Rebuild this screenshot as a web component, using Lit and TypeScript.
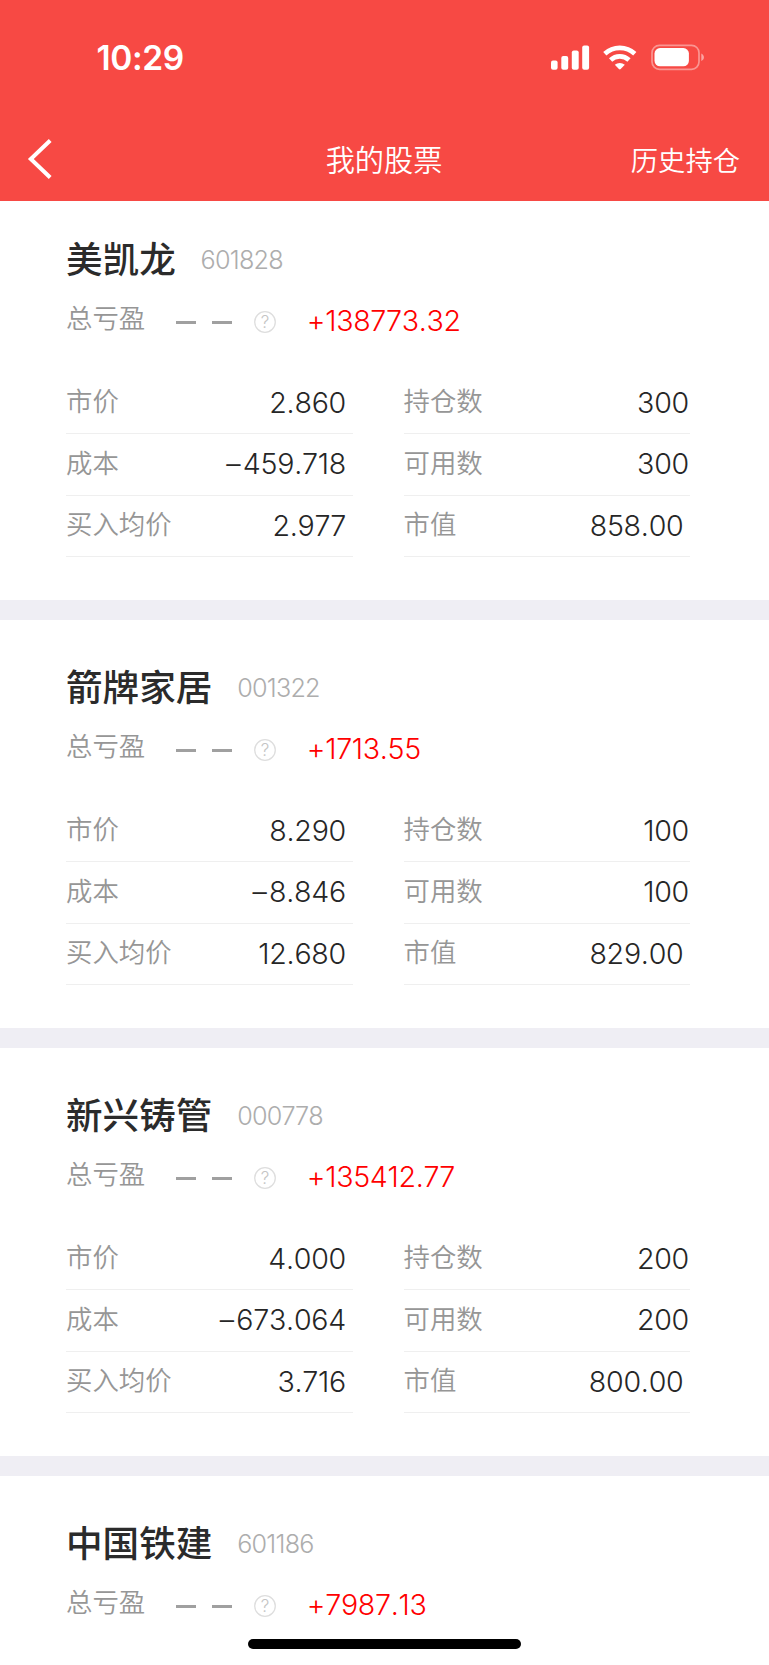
import { LitElement, html, css } from "lit";
import { customElement, property } from "lit/decorators.js";

interface Holding {
  name: string;
  code: string;
  profit: string;
  price?: string;
  cost?: string;
  average?: string;
  held?: string;
  usable?: string;
  value?: string;
}

const HOLDINGS: Holding[] = [
  { name: "美凯龙", code: "601828", profit: "+138773.32", price: "2.860", cost: "–459.718", average: "2.977", held: "300", usable: "300", value: "858.00" },
  { name: "箭牌家居", code: "001322", profit: "+1713.55", price: "8.290", cost: "–8.846", average: "12.680", held: "100", usable: "100", value: "829.00" },
  { name: "新兴铸管", code: "000778", profit: "+135412.77", price: "4.000", cost: "–673.064", average: "3.716", held: "200", usable: "200", value: "800.00" },
  { name: "中国铁建", code: "601186", profit: "+7987.13" },
];

@customElement("status-bar")
class StatusBar extends LitElement {
  static styles = css`
    :host { display: flex; height: 116px; box-sizing: border-box; padding: 0 64px 0 96.5px; justify-content: space-between; align-items: center; }
    .time { font: 600 33.5px/40px Inter, sans-serif; letter-spacing: -0.4px; color: #fff; }
    svg { display: block; }
  `;
  render() {
    return html`
      <span class="time">10:29</span>
      <svg width="154" height="28" viewBox="0 0 154 28" fill="#fff">
        <rect x="0" y="16.6" width="6.6" height="9.2" rx="2" />
        <rect x="10.3" y="12" width="6.9" height="13.8" rx="2" />
        <rect x="20.8" y="6.6" width="6.9" height="19.2" rx="2" />
        <rect x="31.2" y="1.6" width="6.9" height="24.2" rx="2" />
        <g fill="none" stroke="#fff" stroke-width="4.7">
          <path d="M53.8 9.8a22 22 0 0 1 30 0" />
          <path d="M59.6 16a13.5 13.5 0 0 1 18.4 0" />
        </g>
        <path d="M63.8 20.8a7.8 7.8 0 0 1 10 0l-4.1 4.3q-.9.9-1.8 0z" />
        <rect x="101" y="1.3" width="47" height="24" rx="7.5" fill="none" stroke="#fff" stroke-opacity=".42" stroke-width="1.7" />
        <rect x="103.5" y="4.1" width="34.4" height="18.2" rx="5.5" />
        <path d="M150.3 9.5c3.5 1.7 3.5 5.9 0 7.6z" fill-opacity=".5" />
      </svg>
    `;
  }
}

@customElement("nav-bar")
class NavBar extends LitElement {
  static styles = css`
    :host { display: grid; grid-template-columns: 1fr auto 1fr; align-items: center; height: 85px; box-sizing: border-box; padding: 0 29px 0 28px; color: #fff; font: 350 29.2px/40px "Noto Sans CJK SC", sans-serif; }
    svg { display: block; margin-left: -1px; }
    .heading { margin-top: -1px; }
    .action { justify-self: end; font-size: 27.3px; margin-top: 0; }
  `;
  render() {
    return html`
      <svg width="26" height="42" viewBox="0 0 26 42" fill="none" stroke="#fff" stroke-width="4"><path d="M23.2 2.5 3.8 21l19.4 18.5" /></svg>
      <span class="heading">我的股票</span>
      <span class="action">历史持仓</span>
    `;
  }
}

@customElement("stock-card")
class StockCard extends LitElement {
  @property({ attribute: false }) item!: Holding;

  static styles = css`
    :host { display: block; height: 364.4px; padding: 43.6px 79px 0 66px; border-bottom: 20px solid #efeef4; background: #fff; font-family: "Noto Sans CJK SC", sans-serif; color: #969696; }
    .title { display: flex; align-items: center; height: 50px; gap: 24.8px; }
    .name { font-size: 36.6px; line-height: 50px; font-weight: 500; color: #2b2b2b; margin-top: -5px; }
    .code { font: 300 25.2px/50px Inter, sans-serif; letter-spacing: -0.75px; font-kerning: none; color: #adadad; margin-top: -2px; }
    .summary { display: flex; align-items: center; height: 40px; margin-top: 15.4px; }
    .label { font-size: 26.4px; line-height: 40px; font-weight: 350; }
    .summary .label { width: 110px; margin-top: -7px; }
    .dashes { display: flex; gap: 16px; width: 78px; padding-top: 4px; }
    .dash { width: 20px; height: 3px; background: #a0a0a0; }
    .help { display: block; margin-top: 3px; }
    .mark { font: 300 17px Inter, sans-serif; fill: #c4c4c4; }
    .profit { margin: 1px 0 0 30.8px; color: #f00; font: 330 28.6px/40px Inter, sans-serif; letter-spacing: -0.3px; font-kerning: none; }
    .table { display: grid; grid-template-columns: 286.5px 286.5px; justify-content: space-between; grid-auto-rows: 61.6px; margin-top: 31.5px; }
    .row { display: flex; justify-content: space-between; align-items: center; border-bottom: 1.5px solid #efefef; box-sizing: border-box; }
    .row .label { margin-top: -5px; }
    .value { font: 330 28.6px/40px Inter, sans-serif; letter-spacing: -0.25px; font-kerning: none; color: #262626; padding-right: 6.5px; }
    .minus { display: inline-block; margin-right: 2.5px; }
    .tight { padding-right: 1px; }
  `;

  private row(label: string, value = "", tight = false) {
    const negative = value.startsWith("–");
    return html`<div class="row"><span class="label">${label}</span><span class="value ${tight ? "tight" : ""}">${negative ? html`<span class="minus">–</span>${value.slice(1)}` : value}</span></div>`;
  }

  render() {
    const s = this.item;
    return html`
      <div class="title"><span class="name">${s.name}</span><span class="code">${s.code}</span></div>
      <div class="summary">
        <span class="label">总亏盈</span>
        <span class="dashes"><i class="dash"></i><i class="dash"></i></span>
        <svg class="help" width="22" height="22" viewBox="0 0 22 22">
          <circle cx="11" cy="11" r="10.3" fill="none" stroke="#dedede" stroke-width="1.3" />
          <text class="mark" x="11" y="17.2" text-anchor="middle">?</text>
        </svg>
        <span class="profit">${s.profit}</span>
      </div>
      ${s.price
        ? html`<div class="table">
            ${this.row("市价", s.price)}${this.row("持仓数", s.held, true)}
            ${this.row("成本", s.cost)}${this.row("可用数", s.usable, true)}
            ${this.row("买入均价", s.average)}${this.row("市值", s.value)}
          </div>`
        : null}
    `;
  }
}

@customElement("app-root")
class AppRoot extends LitElement {
  static styles = css`
    :host { display: block; position: relative; width: 769px; height: 1665px; overflow: hidden; background: #fff; }
    .header { position: relative; z-index: 1; height: 201.3px; background: #f74944; }
    .list { margin-top: -9.3px; }
    .home { position: absolute; left: 248px; bottom: 16px; width: 273px; height: 10px; border-radius: 5px; background: #000; }
  `;
  render() {
    return html`
      <div class="header"><status-bar></status-bar><nav-bar></nav-bar></div>
      <div class="list">${HOLDINGS.map((h) => html`<stock-card .item=${h}></stock-card>`)}</div>
      <div class="home"></div>
    `;
  }
}
